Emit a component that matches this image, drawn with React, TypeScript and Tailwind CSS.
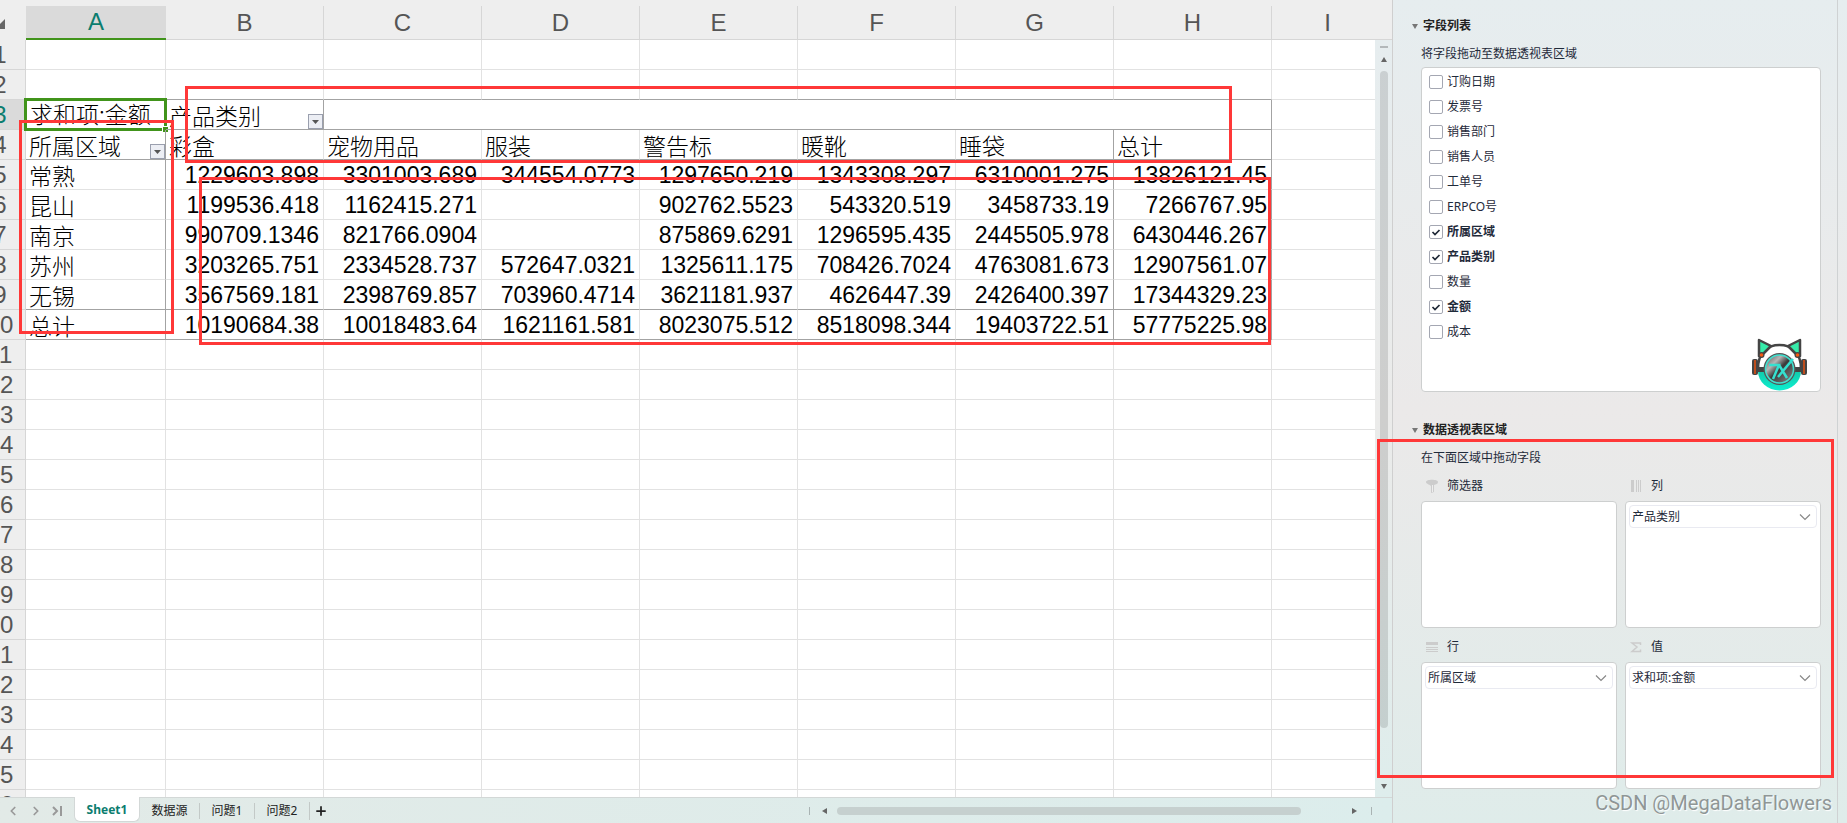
import React from 'react';
import clsx from 'clsx';
import { ChevronLeft, ChevronRight, Plus } from 'lucide-react';

const COLUMNS = ['A', 'B', 'C', 'D', 'E', 'F', 'G', 'H', 'I'];

const PIVOT_HEADER = ['彩盒', '宠物用品', '服装', '警告标', '暖靴', '睡袋', '总计'];

const PIVOT_ROWS = [
  ['常熟', '1229603.898', '3301003.689', '344554.0773', '1297650.219', '1343308.297', '6310001.275', '13826121.45'],
  ['昆山', '1199536.418', '1162415.271', '', '902762.5523', '543320.519', '3458733.19', '7266767.95'],
  ['南京', '990709.1346', '821766.0904', '', '875869.6291', '1296595.435', '2445505.978', '6430446.267'],
  ['苏州', '3203265.751', '2334528.737', '572647.0321', '1325611.175', '708426.7024', '4763081.673', '12907561.07'],
  ['无锡', '3567569.181', '2398769.857', '703960.4714', '3621181.937', '4626447.39', '2426400.397', '17344329.23'],
  ['总计', '10190684.38', '10018483.64', '1621161.581', '8023075.512', '8518098.344', '19403722.51', '57775225.98'],
];

const EMPTY_ROWS = Array.from({ length: 16 }, (_, i) => i + 11);

const FIELDS = [
  { name: '订购日期', checked: false },
  { name: '发票号', checked: false },
  { name: '销售部门', checked: false },
  { name: '销售人员', checked: false },
  { name: '工单号', checked: false },
  { name: 'ERPCO号', checked: false },
  { name: '所属区域', checked: true },
  { name: '产品类别', checked: true },
  { name: '数量', checked: false },
  { name: '金额', checked: true },
  { name: '成本', checked: false },
];

const CELL = 'h-[30px] border-r border-b p-0 overflow-hidden whitespace-nowrap';
const CJK_TEXT = "block pl-[3px] pt-0.5 text-[23px] leading-[27px] font-light font-['Noto_Sans_CJK_SC',sans-serif]";

const RowHeader = ({ n, active }: { n: number; active?: boolean }) => (
  <th
    scope="row"
    className={clsx(
      CELL,
      'border-[#d6d6d6] font-normal',
      active ? 'bg-[#dadada] text-[#0b7d6f]' : 'bg-[#eeeeee] text-[#555555]'
    )}
  >
    <span className="-ml-[26px] block w-[52px] text-center text-2xl leading-[29px]">{n}</span>
  </th>
);

const FilterButton = ({ label }: { label: string }) => (
  <button
    type="button"
    aria-label={label}
    className="absolute right-0 bottom-0 flex size-[15px] items-center justify-center border border-[#9a9fae] bg-[#eceef4]"
  >
    <svg width="7" height="4" viewBox="0 0 7 4">
      <path d="M0 0h7L3.5 4z" fill="#555" />
    </svg>
  </button>
);

const Sheet = () => (
  <table className="w-full table-fixed border-separate border-spacing-0 bg-white text-black">
    <colgroup>
      <col className="w-[26px]" />
      <col className="w-[140px]" />
      {COLUMNS.slice(1, 8).map((c) => (
        <col key={c} className="w-[158px]" />
      ))}
      <col />
    </colgroup>
    <thead>
      <tr>
        <td className="h-[34px] bg-[#eeeeee] p-0 align-middle">
          <svg className="mt-0.5" width="6" height="10" viewBox="0 0 6 10">
            <path d="M0 5L5 0v10H0z" fill="#666" />
          </svg>
        </td>
        {COLUMNS.map((c) => (
          <th
            key={c}
            scope="col"
            className={clsx(
              'h-[34px] p-0 text-2xl leading-8 font-normal',
              c === 'A'
                ? 'border-b-2 border-[#41941b] bg-[#dadada] text-[#0b7d6f]'
                : 'border-b border-[#d6d6d6] bg-[#eeeeee] text-[#555555]',
              c === 'I' && 'pl-2',
              c !== 'A' && c !== 'I' && 'border-r'
            )}
          >
            {c}
          </th>
        ))}
      </tr>
    </thead>
    <tbody>
      {[1, 2].map((n) => (
        <tr key={n}>
          <RowHeader n={n} />
          {COLUMNS.map((c) => (
            <td
              key={c}
              className={clsx(
                CELL,
                'border-r-[#e2e2e2]',
                c === 'I' && 'border-r-0',
                n === 2 && c !== 'A' && c !== 'I' ? 'border-b-[#a3a3a3]' : 'border-b-[#e2e2e2]'
              )}
            />
          ))}
        </tr>
      ))}
      <tr>
        <RowHeader n={3} active />
        <td className="relative h-[30px] p-0 align-top whitespace-nowrap">
          <span className="block pl-1 text-[23px] leading-[27px] font-light font-['Noto_Sans_CJK_SC',sans-serif]">
            求和项:金额
          </span>
          <span className="absolute -top-0.5 -right-px -bottom-px -left-0.5 border-[3px] border-[#41941b]" />
          <span className="absolute -right-0.5 -bottom-0.5 size-1.5 border-t border-l border-white bg-[#41941b]" />
        </td>
        <td className={clsx(CELL, 'relative border-[#a3a3a3]')}>
          <span className={CJK_TEXT}>产品类别</span>
          <FilterButton label="筛选产品类别" />
        </td>
        <td colSpan={6} className={clsx(CELL, 'border-[#a3a3a3]')} />
        <td className={clsx(CELL, 'border-r-0 border-[#e2e2e2]')} />
      </tr>
      <tr>
        <RowHeader n={4} />
        <td className={clsx(CELL, 'relative border-[#a3a3a3]')}>
          <span className={CJK_TEXT}>所属区域</span>
          <FilterButton label="筛选所属区域" />
        </td>
        {PIVOT_HEADER.map((text, i) => (
          <td
            key={text}
            className={clsx(CELL, 'border-b-[#a3a3a3]', i >= 5 ? 'border-r-[#a3a3a3]' : 'border-r-[#e2e2e2]')}
          >
            <span className={CJK_TEXT}>{text}</span>
          </td>
        ))}
        <td className={clsx(CELL, 'border-r-0 border-[#e2e2e2]')} />
      </tr>
      {PIVOT_ROWS.map((row, r) => (
        <tr key={row[0]}>
          <RowHeader n={r + 5} />
          {row.map((value, i) => (
            <td
              key={i}
              className={clsx(
                CELL,
                r >= 4 ? 'border-b-[#a3a3a3]' : 'border-b-[#e2e2e2]',
                i === 0 || i >= 6 ? 'border-r-[#a3a3a3]' : 'border-r-[#e2e2e2]'
              )}
            >
              {i === 0 ? (
                <span className={CJK_TEXT}>{value}</span>
              ) : (
                <span className="block pt-0.5 pr-1 text-right text-[23px] leading-[27px]">{value}</span>
              )}
            </td>
          ))}
          <td className={clsx(CELL, 'border-r-0 border-[#e2e2e2]')} />
        </tr>
      ))}
      {EMPTY_ROWS.map((n) => (
        <tr key={n}>
          <RowHeader n={n} />
          {COLUMNS.map((c) => (
            <td key={c} className={clsx(CELL, 'border-[#e2e2e2]', c === 'I' && 'border-r-0')} />
          ))}
        </tr>
      ))}
    </tbody>
  </table>
);

const VerticalScrollbar = () => (
  <div className="mt-[39px] flex w-[17px] shrink-0 flex-col items-center border-t border-[#d6d6d6] bg-linear-to-b from-[#e6edef] via-[#ebebea] to-[#deedec] pt-1.5">
    <span className="h-0.5 w-2 bg-[#b3b8ba]" />
    <svg className="mt-[9px]" width="6" height="5" viewBox="0 0 6 5">
      <path d="M3 0l3 5H0z" fill="#666" />
    </svg>
    <span className="mt-[9px] w-2 flex-1 rounded-full bg-black/12" />
    <svg className="mt-14 mb-2" width="6" height="5" viewBox="0 0 6 5">
      <path d="M0 0h6L3 5z" fill="#666" />
    </svg>
  </div>
);

const SheetTabs = () => (
  <footer className="flex h-[26px] shrink-0 items-stretch border-t border-[#d3d8d7] bg-linear-to-r from-[#e2eae7] to-[#dcedec] text-xs">
    <div className="flex w-[74px] items-center pl-1.5 text-[#999]">
      <button type="button" aria-label="上一个" className="mr-[9px]">
        <ChevronLeft size={14} strokeWidth={3} />
      </button>
      <button type="button" aria-label="下一个" className="mr-2">
        <ChevronRight size={14} strokeWidth={3} />
      </button>
      <button type="button" aria-label="最后一个">
        <svg width="12" height="10" viewBox="0 0 12 10" fill="none" stroke="currentColor" strokeWidth="2">
          <path d="M2 1l4 4-4 4M10 0v10" />
        </svg>
      </button>
    </div>
    <button
      type="button"
      className="-mt-px mb-px w-[66px] rounded-b-md border border-t-0 border-[#d3d8d7] bg-white pt-0.5 font-bold text-[#0b7d6f]"
    >
      Sheet1
    </button>
    <div className="flex items-center text-[#222]">
      <button type="button" className="w-[59px]">
        数据源
      </button>
      <button type="button" className="w-[55px] border-l border-[#c3c9c7]">
        问题1
      </button>
      <button type="button" className="w-[55px] border-l border-[#c3c9c7]">
        问题2
      </button>
      <button type="button" aria-label="新建工作表" className="border-l border-[#c3c9c7] py-0.5 pl-1">
        <Plus size={14} strokeWidth={3} />
      </button>
    </div>
    <div className="ml-auto flex w-[583px] items-center">
      <span className="h-2 w-px bg-[#a9b3b3]" />
      <svg className="mr-2.5 ml-3" width="5" height="6" viewBox="0 0 5 6">
        <path d="M5 0v6L0 3z" fill="#666" />
      </svg>
      <span className="mr-[51px] h-2 flex-1 rounded-full bg-[#c6d0cf]" />
      <svg className="mr-3.5" width="5" height="6" viewBox="0 0 5 6">
        <path d="M0 0v6l5-3z" fill="#666" />
      </svg>
      <span className="mr-5 h-2 w-px bg-[#a9b3b3]" />
    </div>
  </footer>
);

const SectionTitle = ({ children }: { children: React.ReactNode }) => (
  <h2 className="-ml-[9px] flex items-center gap-[5px] text-xs leading-4 font-bold text-[#222]">
    <svg width="6" height="5" viewBox="0 0 6 5">
      <path d="M0 0h6L3 5z" fill="#777" />
    </svg>
    {children}
  </h2>
);

const FieldRow = ({ name, checked }: { name: string; checked: boolean }) => (
  <label className={clsx('flex h-[25px] items-center gap-1', checked && 'font-bold')}>
    <span className="relative flex size-3.5">
      <input
        type="checkbox"
        defaultChecked={checked}
        className="peer size-3.5 appearance-none rounded-xs border border-[#a4a7b2] bg-white"
      />
      <svg className="absolute inset-0 hidden peer-checked:block" width="14" height="14" viewBox="0 0 14 14">
        <path d="M3.5 7l2.5 2.5L10.5 5" fill="none" stroke="#1f2937" strokeWidth="1.7" />
      </svg>
    </span>
    {name}
  </label>
);

const CatLogo = () => (
  <svg className="absolute right-3 bottom-0" width="57" height="53" viewBox="0 0 57 53">
    <defs>
      <linearGradient id="disc" x1="0" y1="0" x2="1" y2="1">
        <stop offset="0" stopColor="#555" />
        <stop offset="0.3" stopColor="#b5b5b5" />
        <stop offset="0.5" stopColor="#3a3a3a" />
        <stop offset="1" stopColor="#8a8a8a" />
      </linearGradient>
      <linearGradient id="chin" x1="0" y1="0" x2="0" y2="1">
        <stop offset="0" stopColor="#12c9ab" />
        <stop offset="1" stopColor="#0df0d0" />
      </linearGradient>
    </defs>
    {/* chin and head */}
    <path d="M7 33h43a21.5 19.500 0 0 1-43 0z" fill="url(#chin)" />
    <path d="M7 31C7 14 17 7 28.500 7S50 14 50 31z" fill="#fff" stroke="#444" strokeWidth="2.500" />
    {/* ears */}
    <path d="M8 18V2l12 6-9 9zM49 18V2L37 8l9 9z" fill="#35eba9" stroke="#444" strokeWidth="2.500" strokeLinejoin="round" />
    <circle cx="10.500" cy="17" r="3" fill="#444" />
    <circle cx="46.500" cy="17" r="3" fill="#444" />
    <circle cx="10.500" cy="17" r="1.800" fill="#f25a12" />
    <circle cx="46.500" cy="17" r="1.800" fill="#f25a12" />
    {/* headphones */}
    <path d="M5 29h47v5H5z" fill="#444" />
    <rect x="1" y="21" width="6" height="16" rx="2" fill="#444" />
    <rect x="50" y="21" width="6" height="16" rx="2" fill="#444" />
    <path d="M4 22v14M53 22v14" stroke="#e5500f" strokeWidth="1.500" />
    {/* emblem */}
    <circle cx="28.500" cy="31" r="16" fill="#555" />
    <circle cx="28.500" cy="31" r="14" fill="url(#disc)" stroke="#3fe0cf" strokeWidth="1.500" />
    <path d="M18 27h10L22 41M28 27l8 13M42 21L27 39" fill="none" stroke="#35e0d0" strokeWidth="2.500" />
  </svg>
);

interface AreaProps {
  title: string;
  icon: React.ReactNode;
  item?: string;
}

const Area = ({ title, icon, item }: AreaProps) => (
  <section>
    <h3 className="flex h-[30px] items-center gap-2 pl-1">
      {icon}
      {title}
    </h3>
    <div className="h-[127px] rounded border border-[#cdcfcf] bg-white p-[3px]">
      {item && (
        <button
          type="button"
          className="flex h-[23px] w-full items-center justify-between rounded border border-[#e9eaf1] pr-[5px] pl-0.5"
        >
          {item}
          <svg width="12" height="8" viewBox="0 0 12 8">
            <path d="M1 1.500l5 5 5-5" fill="none" stroke="#888" strokeWidth="1.200" />
          </svg>
        </button>
      )}
    </div>
  </section>
);

const FunnelIcon = () => (
  <svg width="14" height="14" viewBox="0 0 14 14" fill="#ccc">
    <path d="M1 3C1 0 13 0 13 3c0 2-2 2-4 3v7l-3 1V7C4 5 1 5 1 3z" />
    <path d="M7.500 6v7" stroke="#eee" />
  </svg>
);

const ColumnsIcon = () => (
  <svg width="14" height="12" viewBox="0 0 14 12" fill="#ccc">
    <path d="M2 0h3v12H2zM7 0h1v12H7zM9 0h1v12H9zM11 0h1v12h-1z" />
  </svg>
);

const RowsIcon = () => (
  <svg width="14" height="12" viewBox="0 0 14 12" fill="#ccc">
    <path d="M1 1h12v3H1zM1 6h12v1H1zM1 8h12v1H1zM1 10h12v1H1z" />
  </svg>
);

const SigmaIcon = () => (
  <svg width="14" height="12" viewBox="0 0 14 12" fill="none" stroke="#ccc" strokeWidth="1.500">
    <path d="M11.500 4V2H3l5 4-5 4.500h8.500v-2" />
  </svg>
);

const FieldPanel = () => (
  <aside className="flex w-[455px] shrink-0 border-l border-[#cfcfcf] bg-linear-to-b from-[#e6edef] via-[#ebe9e9] to-[#dfecea] text-xs text-[#1f2a3a]">
    <div className="flex-1 border-r border-[#cfd2d3] pt-[18px] pr-4 pl-7">
      <SectionTitle>字段列表</SectionTitle>
      <p className="mt-3 leading-4">将字段拖动至数据透视表区域</p>
      <div className="relative mt-[5px] h-[325px] rounded border border-[#cdcfcf] bg-white px-[7px] pt-px">
        {FIELDS.map((f) => (
          <FieldRow key={f.name} {...f} />
        ))}
        <CatLogo />
      </div>
      <div className="mt-[30px]">
        <SectionTitle>数据透视表区域</SectionTitle>
      </div>
      <p className="mt-3 leading-4">在下面区域中拖动字段</p>
      <div className="mt-[5px] grid grid-cols-2 gap-x-2 gap-y-1">
        <Area title="筛选器" icon={<FunnelIcon />} />
        <Area title="列" icon={<ColumnsIcon />} item="产品类别" />
        <Area title="行" icon={<RowsIcon />} item="所属区域" />
        <Area title="值" icon={<SigmaIcon />} item="求和项:金额" />
      </div>
    </div>
    <div className="w-[9px]" />
  </aside>
);

const App: React.FC = () => {
  return (
    <div className="relative flex h-screen overflow-hidden bg-[#eeeeee] font-['Noto_Sans','Noto_Sans_CJK_SC',sans-serif]">
      <main className="flex min-w-0 flex-1 flex-col">
        <div className="flex min-h-0 flex-1">
          <div className="min-w-0 flex-1 overflow-hidden pt-1.5 font-['Liberation_Sans',sans-serif]">
            <Sheet />
          </div>
          <VerticalScrollbar />
        </div>
        <SheetTabs />
      </main>
      <FieldPanel />

      {/* Annotation frames */}
      <div className="pointer-events-none absolute top-[86px] left-[185px] h-[77px] w-[1047px] border-3 border-[#ff3838]" />
      <div className="pointer-events-none absolute top-[120px] left-[19px] h-[214px] w-[155px] border-3 border-[#ff3838]" />
      <div className="pointer-events-none absolute top-[177px] left-[199px] h-[168px] w-[1072px] border-3 border-[#ff3838]" />
      <div className="pointer-events-none absolute top-[439px] right-[13px] h-[339px] w-[457px] border-3 border-[#ff3838]" />

      <p className="pointer-events-none absolute right-[15px] bottom-1.5 font-['Roboto',sans-serif] text-xl leading-7 text-[#8f9696] [text-shadow:1px_1px_1px_white]">
        CSDN @MegaDataFlowers
      </p>
    </div>
  );
};

export default App;
